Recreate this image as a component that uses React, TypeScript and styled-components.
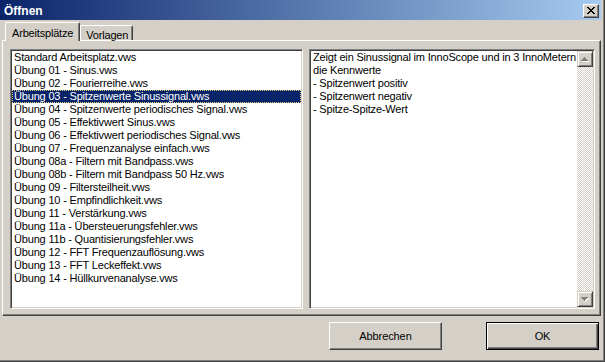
import React from "react";
import styled, { createGlobalStyle } from "styled-components";

const GlobalStyle = createGlobalStyle`
  html, body {
    margin: 0;
    padding: 0;
    background: #d4d0c8;
  }
  body {
    font-family: "Liberation Sans", Arial, sans-serif;
    font-size: 11px;
    color: #000;
  }
`;

const Window = styled.div`
  width: 605px;
  height: 362px;
  box-sizing: border-box;
  padding: 0 3px 1px 0;
  background: #d4d0c8;
  border-right: 1px solid #404040;
  border-bottom: 1px solid #404040;
  box-shadow: inset -1px -1px 0 #808080;
  display: flex;
  flex-direction: column;
`;

const TitleBar = styled.div`
  height: 20px;
  display: flex;
  align-items: flex-start;
  justify-content: space-between;
  padding: 0 2px 0 4px;
  background: linear-gradient(to right, #0a246a, #a6caf0);
`;

const TitleText = styled.span`
  color: #fff;
  font-weight: bold;
  font-size: 12px;
  line-height: 14px;
  padding-top: 4px;
`;

const CaptionButton = styled.div`
  width: 16px;
  height: 14px;
  box-sizing: border-box;
  margin-top: 4px;
  background: #d4d0c8;
  border-top: 1px solid #fff;
  border-left: 1px solid #fff;
  border-right: 1px solid #404040;
  border-bottom: 1px solid #404040;
  box-shadow: inset -1px -1px 0 #808080;
  display: flex;
  align-items: center;
  justify-content: center;
  svg {
    margin: 0 1px 1px 0;
  }
`;

const TabRow = styled.div`
  height: 18px;
  margin-top: 2px;
  padding-left: 5px;
  display: flex;
  align-items: flex-end;
`;

const Tab = styled.div<{ $active?: boolean }>`
  position: relative;
  z-index: ${(p) => (p.$active ? 1 : 0)};
  height: ${(p) => (p.$active ? "19px" : "15px")};
  margin-bottom: ${(p) => (p.$active ? "-1px" : "0")};
  padding: ${(p) => (p.$active ? "4px 6px 0 6px" : "3px 4px 0 5px")};
  box-sizing: border-box;
  background: #d4d0c8;
  border-top: 1px solid #fff;
  border-left: 1px solid #fff;
  border-right: 1px solid #404040;
  border-radius: 2px 2px 0 0;
  box-shadow: inset -1px 0 0 #808080;
  letter-spacing: -0.18px;
  white-space: nowrap;
`;

const TabPanel = styled.div`
  margin-left: 2px;
  height: 276px;
  box-sizing: border-box;
  padding: 8px 5px 6px 7px;
  border-top: 1px solid #fff;
  border-left: 1px solid #fff;
  border-right: 1px solid #404040;
  border-bottom: 1px solid #404040;
  box-shadow: inset -1px -1px 0 #808080;
  display: grid;
  grid-template-columns: 293px 286px;
  column-gap: 6px;
`;

const Sunken = styled.div`
  height: 260px;
  box-sizing: border-box;
  background: #fff;
  border-top: 1px solid #808080;
  border-left: 1px solid #808080;
  border-right: 1px solid #fff;
  border-bottom: 1px solid #fff;
  box-shadow: inset 1px 1px 0 #404040, inset -1px -1px 0 #d4d0c8;
  padding: 1px;
  overflow: hidden;
`;

const FileList = styled(Sunken)``;

const Row = styled.div<{ $selected?: boolean }>`
  height: 13px;
  line-height: 13px;
  box-sizing: border-box;
  padding-left: 2px;
  white-space: nowrap;
  letter-spacing: -0.18px;
  background: ${(p) => (p.$selected ? "#0a246a" : "transparent")};
  color: ${(p) => (p.$selected ? "#fff" : "#000")};
  ${(p) =>
    p.$selected &&
    `
    border: 1px dotted #e8cf7e;
    padding-left: 1px;
    line-height: 11px;
  `}
`;

const InfoBox = styled(Sunken)`
  display: flex;
`;

const InfoText = styled.div`
  flex: 1;
  padding-left: 2px;
  letter-spacing: -0.18px;
  p {
    margin: 0;
    height: 13px;
    line-height: 13px;
    white-space: nowrap;
  }
`;

const ScrollBar = styled.div`
  width: 16px;
  display: flex;
  flex-direction: column;
  justify-content: space-between;
  background-color: #fff;
  background-image: repeating-conic-gradient(#d4d0c8 0% 25%, #fff 0% 50%);
  background-size: 2px 2px;
`;

const ScrollButton = styled.div`
  width: 16px;
  height: 16px;
  box-sizing: border-box;
  background: #d4d0c8;
  border-top: 1px solid #d4d0c8;
  border-left: 1px solid #d4d0c8;
  border-right: 1px solid #404040;
  border-bottom: 1px solid #404040;
  box-shadow: inset 1px 1px 0 #fff, inset -1px -1px 0 #808080;
  display: flex;
  align-items: center;
  justify-content: center;
`;

const Footer = styled.div`
  flex: 1;
  display: flex;
  justify-content: flex-end;
  align-items: flex-start;
  gap: 44px;
  padding: 6px 2px 0 0;
`;

const Button = styled.button<{ $default?: boolean }>`
  width: 113px;
  height: 28px;
  box-sizing: border-box;
  font-family: "Liberation Sans", Arial, sans-serif;
  font-size: 11px;
  letter-spacing: -0.1px;
  color: #000;
  background: #d4d0c8;
  padding: 0;
  border-style: solid;
  border-width: 1px;
  border-color: ${(p) =>
    p.$default ? "#000" : "#fff #404040 #404040 #fff"};
  box-shadow: ${(p) =>
    p.$default
      ? "inset 1px 1px 0 #fff, inset -1px -1px 0 #404040, inset -2px -2px 0 #808080"
      : "inset -1px -1px 0 #808080"};
`;

const CloseGlyph = () => (
  <svg width="8" height="7" viewBox="0 0 8 7" shapeRendering="crispEdges">
    <path
      fill="#000"
      d="M0 0h2v1H0zM6 0h2v1H6zM1 1h2v1H1zM5 1h2v1H5zM2 2h4v1H2zM3 3h2v1H3zM2 4h4v1H2zM1 5h2v1H1zM5 5h2v1H5zM0 6h2v1H0zM6 6h2v1H6z"
    />
  </svg>
);

const Arrow = ({ down }: { down?: boolean }) => {
  const rows = down ? [7, 5, 3, 1] : [1, 3, 5, 7];
  const shape = rows
    .map((w, i) => `M${(7 - w) / 2} ${i}h${w}v1h-${w}z`)
    .join("");
  return (
    <svg width="8" height="5" viewBox="0 0 8 5" shapeRendering="crispEdges">
      <path fill="#fff" d={shape} transform="translate(1 1)" />
      <path fill="#808080" d={shape} />
    </svg>
  );
};

const files = [
  "Standard Arbeitsplatz.vws",
  "Übung 01 - Sinus.vws",
  "Übung 02 - Fourierreihe.vws",
  "Übung 03 - Spitzenwerte Sinussignal.vws",
  "Übung 04 - Spitzenwerte periodisches Signal.vws",
  "Übung 05 - Effektivwert Sinus.vws",
  "Übung 06 - Effektivwert periodisches Signal.vws",
  "Übung 07 - Frequenzanalyse einfach.vws",
  "Übung 08a - Filtern mit Bandpass.vws",
  "Übung 08b - Filtern mit Bandpass 50 Hz.vws",
  "Übung 09 - Filtersteilheit.vws",
  "Übung 10 - Empfindlichkeit.vws",
  "Übung 11 - Verstärkung.vws",
  "Übung 11a - Übersteuerungsfehler.vws",
  "Übung 11b - Quantisierungsfehler.vws",
  "Übung 12 - FFT Frequenzauflösung.vws",
  "Übung 13 - FFT Leckeffekt.vws",
  "Übung 14 - Hüllkurvenanalyse.vws",
];

const description = [
  "Zeigt ein Sinussignal im InnoScope und in 3 InnoMetern",
  "die Kennwerte",
  "- Spitzenwert positiv",
  "- Spitzenwert negativ",
  "- Spitze-Spitze-Wert",
];

const SELECTED = 3;

export default function App() {
  return (
    <>
      <GlobalStyle />
      <Window>
        <TitleBar>
          <TitleText>Öffnen</TitleText>
          <CaptionButton>
            <CloseGlyph />
          </CaptionButton>
        </TitleBar>
        <TabRow>
          <Tab $active>Arbeitsplätze</Tab>
          <Tab>Vorlagen</Tab>
        </TabRow>
        <TabPanel>
          <FileList>
            {files.map((name, i) => (
              <Row key={name} $selected={i === SELECTED}>
                {name}
              </Row>
            ))}
          </FileList>
          <InfoBox>
            <InfoText>
              {description.map((line) => (
                <p key={line}>{line}</p>
              ))}
            </InfoText>
            <ScrollBar>
              <ScrollButton>
                <Arrow />
              </ScrollButton>
              <ScrollButton>
                <Arrow down />
              </ScrollButton>
            </ScrollBar>
          </InfoBox>
        </TabPanel>
        <Footer>
          <Button>Abbrechen</Button>
          <Button $default>OK</Button>
        </Footer>
      </Window>
    </>
  );
}
